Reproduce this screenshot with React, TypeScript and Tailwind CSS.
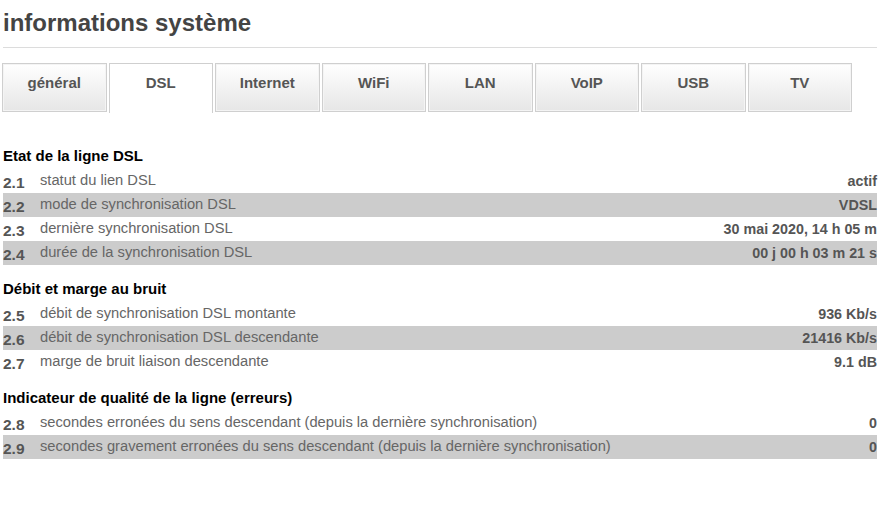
import React from 'react';

const TABS = ['général', 'DSL', 'Internet', 'WiFi', 'LAN', 'VoIP', 'USB', 'TV'];

type Row = { num: string; label: string; value: string };

const SECTIONS: { title: string; rows: Row[] }[] = [
  {
    title: 'Etat de la ligne DSL',
    rows: [
      { num: '2.1', label: 'statut du lien DSL', value: 'actif' },
      { num: '2.2', label: 'mode de synchronisation DSL', value: 'VDSL' },
      { num: '2.3', label: 'dernière synchronisation DSL', value: '30 mai 2020, 14 h 05 m' },
      { num: '2.4', label: 'durée de la synchronisation DSL', value: '00 j 00 h 03 m 21 s' },
    ],
  },
  {
    title: 'Débit et marge au bruit',
    rows: [
      { num: '2.5', label: 'débit de synchronisation DSL montante', value: '936 Kb/s' },
      { num: '2.6', label: 'débit de synchronisation DSL descendante', value: '21416 Kb/s' },
      { num: '2.7', label: 'marge de bruit liaison descendante', value: '9.1 dB' },
    ],
  },
  {
    title: 'Indicateur de qualité de la ligne (erreurs)',
    rows: [
      {
        num: '2.8',
        label: 'secondes erronées du sens descendant (depuis la dernière synchronisation)',
        value: '0',
      },
      {
        num: '2.9',
        label: 'secondes gravement erronées du sens descendant (depuis la dernière synchronisation)',
        value: '0',
      },
    ],
  },
];

function Tab({ label, active }: { label: string; active: boolean }) {
  // onglet actif : blanc, ouvert en bas
  if (active) {
    return (
      <div className="w-[104.5px] h-[50px] border border-b-0 border-[#cfcfcf] bg-white flex justify-center pt-[8px] text-[15px] font-bold text-[#555]">
        {label}
      </div>
    );
  }
  return (
    <div className="w-[104.5px] h-[49px] border border-[#cfcfcf] bg-gradient-to-b from-white to-[#e6e6e6] flex justify-center pt-[8px] text-[15px] font-bold text-[#555] shadow-[inset_0_0_0_1px_#f4f4f4]">
      {label}
    </div>
  );
}

export default function App() {
  return (
    <div
      className="w-[890px] h-[509px] bg-white overflow-hidden"
      style={{ fontFamily: '"Liberation Sans", Arial, sans-serif' }}
    >
      <div className="pl-[3px] w-[877px]">
        <h1 className="pt-[8px] text-[24px] leading-[29px] font-bold text-[#444]">
          informations système
        </h1>
        <div className="mt-[10px] border-t border-[#dcdcdc]" />

        <div className="mt-[15px] flex gap-[2px] items-start -ml-[1px]">
          {TABS.map((t) => (
            <Tab key={t} label={t} active={t === 'DSL'} />
          ))}
        </div>

        <div className="mt-[30px]">
          {SECTIONS.map((s, i) => (
            <div key={s.title} className={i > 0 ? 'mt-[11px]' : ''}>
              <div className="h-[26px] leading-[26px] text-[15px] font-bold text-black">
                {s.title}
              </div>
              {s.rows.map((r, j) => (
                <div
                  key={r.num}
                  className={`h-[24px] flex items-center ${j % 2 === 1 ? 'bg-[#cccccc]' : ''}`}
                >
                  <span className="w-[37px] text-[15.5px] font-bold text-[#555] pt-[4px]">{r.num}</span>
                  <span className="flex-1 text-[14.7px] text-[#666] -mt-[1px]">{r.label}</span>
                  <span className="text-[14.3px] font-bold text-[#555] pt-[2px]">{r.value}</span>
                </div>
              ))}
            </div>
          ))}
        </div>
      </div>
    </div>
  );
}
